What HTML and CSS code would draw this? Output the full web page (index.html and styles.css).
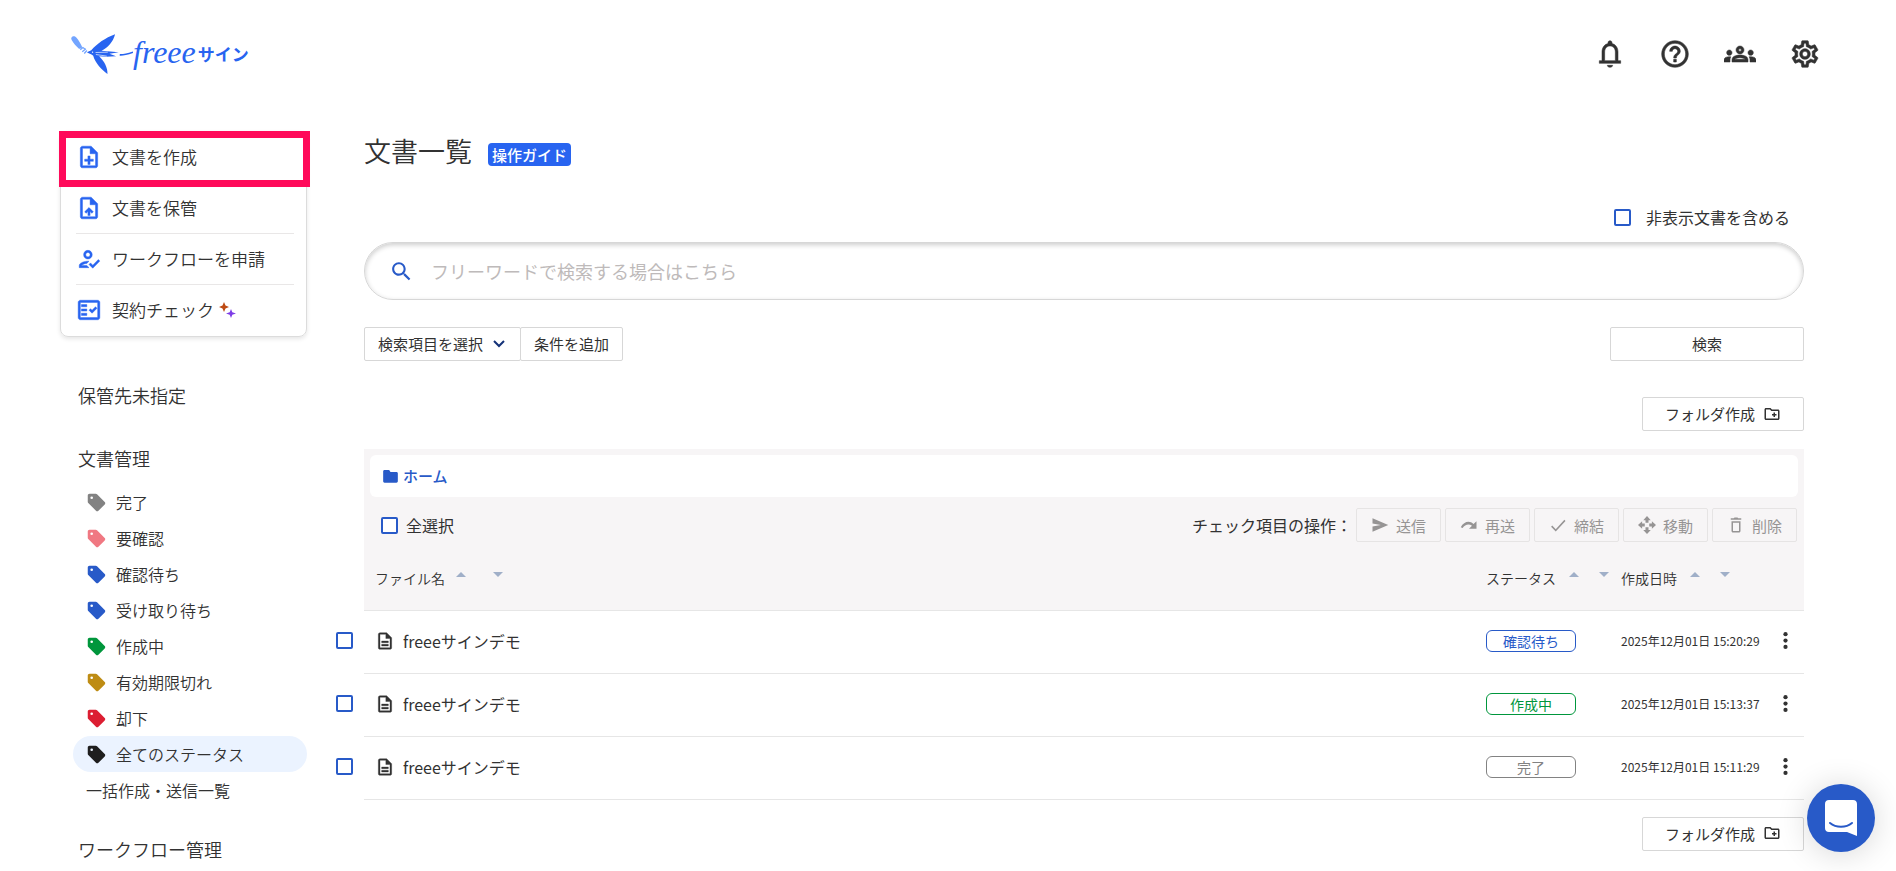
FILE: index.html
```
<!DOCTYPE html>
<html lang="ja">
<head>
    <meta charset="UTF-8">
    <meta name="viewport" content="width=device-width, initial-scale=1.0">
    <title>文書一覧 | freee サイン</title>
    <link rel="stylesheet" href="styles.css">
</head>
<body>
    <!-- shared icons -->
    <svg class="sprite" aria-hidden="true">
        <symbol id="tag" viewBox="0 0 24 24"><path d="M21.4 11.4l-8.8-8.8c-.4-.4-.9-.6-1.4-.6H4c-1.100 0-2 .9-2 2v7.200c0 .5.200 1 .6 1.400l8.800 8.800c.8.8 2.100.8 2.800 0l7.200-7.200c.8-.8.8-2 0-2.800zM6.500 8a1.500 1.500 0 1 1 0-3 1.500 1.500 0 0 1 0 3z"/></symbol>
        <symbol id="folder-add" viewBox="0 0 24 24"><path d="M20 6h-8l-2-2H4c-1.110 0-1.990.89-1.990 2L2 18c0 1.110.89 2 2 2h16c1.110 0 2-.89 2-2V8c0-1.110-.89-2-2-2zm0 12H4V6h5.170l2 2H20v10zm-8-4h2v2h2v-2h2v-2h-2v-2h-2v2h-2z"/></symbol>
        <symbol id="file" viewBox="0 0 24 24"><path d="M8 16h8v2H8zm0-4h8v2H8zm6-10H6c-1.100 0-2 .9-2 2v16c0 1.100.89 2 1.990 2H18c1.100 0 2-.9 2-2V8l-6-6zm4 18H6V4h7v5h5v11z"/></symbol>
        <symbol id="more" viewBox="0 0 24 24"><circle cx="12" cy="3" r="3"/><circle cx="12" cy="12" r="3"/><circle cx="12" cy="21" r="3"/></symbol>
        <symbol id="up" viewBox="0 0 10 5"><path d="M0 5l5-5 5 5z"/></symbol>
        <symbol id="down" viewBox="0 0 10 5"><path d="M0 0l5 5 5-5z"/></symbol>
    </svg>

    <header class="header">
        <a class="logo" href="#" aria-label="freee サイン">
            <svg class="logo-bird" viewBox="60 40 190 125">
                <path fill="#73a5ff" d="M64 54c2-6 10-7 15-1 7 8 13 18 18 29-3 4-6 5-10 5-8-8-17-17-21-25-1-3-3-5-2-8z"/>
                <path fill="none" stroke="#73a5ff" stroke-width="4" d="M91 90l8-7 7 5M97 96l11-9M103 101l8-9"/>
                <path d="M111 97l13-6c18-20 42-37 72-48-6 23-22 41-41 50l18 1 34 3-28 5 20 7-30 2-21-2c15 15 26 34 25 54-18-13-37-33-43-55-4-5-12-7-19-11z"/>
                <path fill="none" stroke="#fff" stroke-width="2" d="M137 98l37-1M138 104l33 5"/>
                <circle cx="128" cy="97" r="2" fill="#fff"/>
                <path fill="none" stroke="#2864f0" stroke-width="5" d="M210 105c12 1 22-2 40-8"/>
            </svg>
            <span class="logo-name">freee</span>
            <span class="logo-product">サイン</span>
        </a>
        <nav class="header-nav">
            <button type="button" aria-label="お知らせ"><svg viewBox="0 0 24 24"><path d="M12 22c1.100 0 2-.6 2-1.500h-4c0 .9.900 1.500 2 1.500zm6-5v-6.500c0-3.070-1.630-5.640-4.500-6.320V3.500C13.500 2.670 12.830 2 12 2s-1.500.67-1.500 1.500v.68C7.640 4.860 6 7.420 6 10.500V17H4v2h16v-2h-2zm-2 0H8v-6.500C8 8.020 9.510 6 12 6s4 2.020 4 4.500V17z"/></svg></button>
            <button type="button" aria-label="ヘルプ"><svg viewBox="0 0 24 24"><path d="M11 18h2v-2h-2v2zm1-16C6.480 2 2 6.480 2 12s4.480 10 10 10 10-4.480 10-10S17.520 2 12 2zm0 18c-4.410 0-8-3.590-8-8s3.590-8 8-8 8 3.590 8 8-3.590 8-8 8zm0-14c-2.210 0-4 1.790-4 4h2c0-1.100.9-2 2-2s2 .9 2 2c0 2-3 1.750-3 5h2c0-2.250 3-2.500 3-5 0-2.210-1.790-4-4-4z"/></svg></button>
            <button type="button" aria-label="グループ"><svg viewBox="0 0 24 24"><path d="M4 13c1.100 0 2-.9 2-2s-.9-2-2-2-2 .9-2 2 .9 2 2 2zm1.130 1.100C4.760 14.040 4.390 14 4 14c-.99 0-1.930.21-2.780.58C.48 14.900 0 15.620 0 16.430V18h4.500v-1.610c0-.83.23-1.610.63-2.290zM20 13c1.100 0 2-.9 2-2s-.9-2-2-2-2 .9-2 2 .9 2 2 2zm4 3.430c0-.81-.48-1.530-1.220-1.850C21.930 14.210 20.990 14 20 14c-.39 0-.76.04-1.130.1.400.68.630 1.460.630 2.290V18H24v-1.570zm-7.760-2.780c-1.170-.52-2.610-.9-4.240-.9s-3.070.39-4.240.9C6.680 14.130 6 15.210 6 16.390V18h12v-1.610c0-1.180-.68-2.260-1.760-2.740zM8.070 16c.09-.23.13-.39.91-.69.97-.38 1.990-.56 3.020-.56s2.050.18 3.020.56c.77.3.81.46.91.69H8.070zM12 8c.55 0 1 .45 1 1s-.45 1-1 1-1-.45-1-1 .45-1 1-1m0-2c-1.660 0-3 1.340-3 3s1.340 3 3 3 3-1.340 3-3-1.340-3-3-3z"/></svg></button>
            <button type="button" aria-label="設定"><svg viewBox="0 0 24 24"><path d="M19.430 12.980c.04-.32.070-.64.070-.98s-.03-.66-.07-.98l2.110-1.650c.19-.15.240-.42.120-.64l-2-3.460c-.09-.16-.26-.25-.44-.25-.06 0-.12.010-.17.030l-2.490 1c-.52-.4-1.080-.73-1.690-.98l-.38-2.650C14.460 2.180 14.250 2 14 2h-4c-.25 0-.46.180-.49.420l-.38 2.650c-.61.250-1.170.59-1.690.98l-2.490-1c-.06-.02-.12-.03-.18-.03-.17 0-.34.090-.43.250l-2 3.460c-.13.220-.07.490.12.640l2.110 1.650c-.04.320-.07.650-.07.980s.03.660.07.980l-2.110 1.650c-.19.150-.24.420-.12.640l2 3.460c.09.160.26.250.44.250.06 0 .12-.01.170-.03l2.490-1c.52.400 1.080.73 1.690.98l.38 2.650c.03.240.24.420.49.420h4c.25 0 .46-.18.490-.42l.38-2.650c.61-.25 1.170-.59 1.690-.98l2.490 1c.06.020.12.030.18.030.17 0 .34-.09.430-.25l2-3.460c.12-.22.070-.49-.12-.64l-2.110-1.650zm-1.980-1.710c.04.310.050.52.050.73s-.02.430-.05.730l-.14 1.130.89.7 1.080.84-.7 1.210-1.270-.51-1.040-.42-.9.68c-.43.320-.84.560-1.250.73l-1.060.43-.16 1.130-.2 1.350h-1.400l-.19-1.350-.16-1.130-1.060-.43c-.43-.18-.83-.41-1.230-.71l-.91-.7-1.060.43-1.270.51-.7-1.210 1.080-.84.89-.7-.14-1.130c-.03-.31-.05-.54-.05-.74s.02-.43.05-.73l.14-1.130-.89-.7-1.080-.84.7-1.210 1.270.51 1.040.42.9-.68c.43-.32.84-.56 1.250-.73l1.060-.43.16-1.130.2-1.350h1.390l.19 1.350.16 1.130 1.060.43c.43.180.83.410 1.230.71l.91.7 1.060-.43 1.270-.51.7 1.210-1.070.85-.89.7.14 1.130zM12 8c-2.210 0-4 1.790-4 4s1.790 4 4 4 4-1.790 4-4-1.790-4-4-4zm0 6c-1.100 0-2-.9-2-2s.9-2 2-2 2 .9 2 2-.9 2-2 2z"/></svg></button>
        </nav>
    </header>

    <div class="layout">
        <aside class="sidebar">
            <ul class="actions">
                <li class="marked"><a href="#"><svg viewBox="0 0 24 24"><path d="M13 11h-2v3H8v2h3v3h2v-3h3v-2h-3zm1-9H6c-1.100 0-2 .9-2 2v16c0 1.100.89 2 1.990 2H18c1.100 0 2-.9 2-2V8l-6-6zm4 18H6V4h7v5h5v11z"/></svg>文書を作成</a></li>
                <li><a href="#"><svg viewBox="0 0 24 24"><path d="M14 2H6c-1.100 0-2 .9-2 2v16c0 1.100.89 2 1.990 2H18c1.100 0 2-.9 2-2V8l-6-6zm4 18H6V4h7v5h5v11zM8 15.500l1.410 1.410L11 15.330V19h2v-3.670l1.590 1.590L16 15.500 12.010 11.500z"/></svg>文書を保管</a></li>
                <li><a href="#"><svg viewBox="0 0 24 24"><path d="M11 12c2.210 0 4-1.790 4-4s-1.790-4-4-4-4 1.790-4 4 1.790 4 4 4zm0-6c1.100 0 2 .9 2 2s-.9 2-2 2-2-.9-2-2 .9-2 2-2zM5 18c.2-.63 2.570-1.680 4.960-1.940l2.040-2c-.39-.04-.68-.06-1-.06-2.670 0-8 1.340-8 4v2h9l-2-2H5zm15.600-5.500l-5.130 5.170-2.070-2.080L12 17l3.470 3.500L22 13.910z"/></svg>ワークフローを申請</a></li>
                <li><a href="#"><svg viewBox="0 0 24 24"><path d="M20 3H4c-1.100 0-2 .9-2 2v14c0 1.100.9 2 2 2h16c1.100 0 2-.9 2-2V5c0-1.100-.9-2-2-2zm0 16H4V5h16v14zM19.410 10.420L17.990 9l-3.170 3.170-1.410-1.420L12 12.160 14.820 15zM5 7h5v2H5zm0 4h5v2H5zm0 4h5v2H5z"/></svg>契約チェック<svg class="sparkle" viewBox="0 0 18 18"><path fill="#be4b14" d="M6 1l1.500 3.500L11 6 7.500 7.500 6 11 4.500 7.500 1 6l3.500-1.500z"/><path fill="#7d3ce6" d="M13 8l1.300 3.200 3.700 1.300-3.700 1.300L13 17l-1.300-3.200L8 12.500l3.700-1.300z"/></svg></a></li>
            </ul>

            <nav class="menu">
                <a class="menu-title" href="#">保管先未指定</a>
                <a class="menu-title" href="#">文書管理</a>
                <ul class="statuses">
                    <li><a href="#"><svg class="gray"><use href="#tag"/></svg>完了</a></li>
                    <li><a href="#"><svg class="pink"><use href="#tag"/></svg>要確認</a></li>
                    <li><a href="#"><svg class="blue"><use href="#tag"/></svg>確認待ち</a></li>
                    <li><a href="#"><svg class="blue"><use href="#tag"/></svg>受け取り待ち</a></li>
                    <li><a href="#"><svg class="green"><use href="#tag"/></svg>作成中</a></li>
                    <li><a href="#"><svg class="yellow"><use href="#tag"/></svg>有効期限切れ</a></li>
                    <li><a href="#"><svg class="red"><use href="#tag"/></svg>却下</a></li>
                    <li><a class="current" href="#"><svg class="black"><use href="#tag"/></svg>全てのステータス</a></li>
                    <li><a href="#">一括作成・送信一覧</a></li>
                </ul>
                <a class="menu-title" href="#">ワークフロー管理</a>
            </nav>
        </aside>

        <main class="main">
            <div class="title-row">
                <h1>文書一覧</h1>
                <a class="guide" href="#">操作ガイド</a>
            </div>

            <label class="hidden-docs"><input type="checkbox">非表示文書を含める</label>

            <form class="search" action="#">
                <div class="search-box">
                    <svg viewBox="0 0 24 24"><path d="M15.500 14h-.79l-.28-.27C15.410 12.590 16 11.110 16 9.500 16 5.910 13.090 3 9.500 3S3 5.910 3 9.500 5.910 16 9.500 16c1.610 0 3.090-.59 4.230-1.570l.27.28v.79l5 4.990L20.490 19l-4.990-5zm-6 0C7.010 14 5 11.990 5 9.500S7.010 5 9.500 5 14 7.010 14 9.500 11.990 14 9.500 14z"/></svg>
                    <input type="text" aria-label="フリーワード" placeholder="フリーワードで検索する場合はこちら">
                </div>
                <div class="search-controls">
                    <select class="btn" aria-label="検索項目"><option>検索項目を選択</option></select>
                    <button class="btn add" type="button">条件を追加</button>
                    <button class="btn submit" type="submit">検索</button>
                </div>
            </form>

            <div class="folder-row">
                <button class="btn folder" type="button">フォルダ作成<svg><use href="#folder-add"/></svg></button>
            </div>

            <section class="panel">
                <div class="breadcrumb">
                    <a href="#"><svg viewBox="0 0 24 24"><path d="M10 3H3c-1.100 0-2 1-2 2v15c0 1 .9 2 2 2h18c1.100 0 2-1 2-2V8c0-1.100-.9-2-2-2h-9z"/></svg>ホーム</a>
                </div>
                <div class="bulk">
                    <label class="select-all"><input type="checkbox">全選択</label>
                    <span class="bulk-label">チェック項目の操作：</span>
                    <button class="btn" type="button" disabled><svg viewBox="0 0 24 24"><path d="M2 3l21 9-21 9v-7l11-2-11-2z"/></svg>送信</button>
                    <button class="btn" type="button" disabled><svg viewBox="0 0 24 24"><path d="M22 7v10H12l4-4c-4.500-3.500-9.500-1.500-12.500 3l-2.500-1c4-7.500 11.500-9.500 17-4.500z"/></svg>再送</button>
                    <button class="btn" type="button" disabled><svg viewBox="0 0 24 24"><path d="M9 17.500L4.300 12.800l-1.500 1.500L9 20.500 22 6.500l-1.500-1.500z"/></svg>締結</button>
                    <button class="btn" type="button" disabled><svg viewBox="0 0 24 24"><path d="M12 0l5 5.500h-3V9h-4V5.500H7zM12 24l-5-5.500h3V15h4v3.500h3zM0 12l5.500-5v3H9v4H5.500v3zM24 12l-5.500 5v-3H15v-4h3.500V7z"/></svg>移動</button>
                    <button class="btn" type="button" disabled><svg viewBox="0 0 24 24"><path d="M15 3l-1-1h-4L9 3H5v2h14V3zM6 7v13c0 1.100.9 2 2 2h8c1.100 0 2-.9 2-2V7zm10 13H8V9h8z"/></svg>削除</button>
                </div>
            </section>

            <table class="docs">
                <thead>
                    <tr>
                        <td class="col-check"></td>
                        <th class="col-name"><div class="sort wide">ファイル名<button type="button" aria-label="昇順"><svg><use href="#up"/></svg></button><button type="button" aria-label="降順"><svg><use href="#down"/></svg></button></div></th>
                        <th class="col-status"><div class="sort">ステータス<button type="button" aria-label="昇順"><svg><use href="#up"/></svg></button><button type="button" aria-label="降順"><svg><use href="#down"/></svg></button></div></th>
                        <th class="col-date"><div class="sort">作成日時<button type="button" aria-label="昇順"><svg><use href="#up"/></svg></button><button type="button" aria-label="降順"><svg><use href="#down"/></svg></button></div></th>
                        <td class="col-menu"></td>
                    </tr>
                </thead>
                <tbody>
                    <tr>
                        <td class="col-check"><input type="checkbox" aria-label="文書を選択"></td>
                        <td class="col-name"><a href="#"><svg><use href="#file"/></svg>freeeサインデモ</a></td>
                        <td><span class="status blue">確認待ち</span></td>
                        <td class="date">2025年12月01日 15:20:29</td>
                        <td><button type="button" class="more" aria-label="メニュー"><svg><use href="#more"/></svg></button></td>
                    </tr>
                    <tr>
                        <td class="col-check"><input type="checkbox" aria-label="文書を選択"></td>
                        <td class="col-name"><a href="#"><svg><use href="#file"/></svg>freeeサインデモ</a></td>
                        <td><span class="status green">作成中</span></td>
                        <td class="date">2025年12月01日 15:13:37</td>
                        <td><button type="button" class="more" aria-label="メニュー"><svg><use href="#more"/></svg></button></td>
                    </tr>
                    <tr>
                        <td class="col-check"><input type="checkbox" aria-label="文書を選択"></td>
                        <td class="col-name"><a href="#"><svg><use href="#file"/></svg>freeeサインデモ</a></td>
                        <td><span class="status gray">完了</span></td>
                        <td class="date">2025年12月01日 15:11:29</td>
                        <td><button type="button" class="more" aria-label="メニュー"><svg><use href="#more"/></svg></button></td>
                    </tr>
                </tbody>
            </table>

            <div class="folder-row bottom">
                <button class="btn folder" type="button">フォルダ作成<svg><use href="#folder-add"/></svg></button>
            </div>
        </main>
    </div>

    <button class="chat" type="button" aria-label="チャットを開く">
        <svg viewBox="0 0 32 36"><path fill="#fff" d="M4 0h24c2.500 0 4 1.500 4 4v32l-10-4H4c-2.500 0-4-1.500-4-4V4c0-2.500 1.500-4 4-4z"/><path fill="none" stroke="#285ac8" stroke-width="2" stroke-linecap="round" d="M5 23c6 5 16 5 22 0"/></svg>
    </button>
</body>
</html>
```
FILE: styles.css
```
*,
*::after {
    box-sizing: border-box;
}

body {
    margin: 0;
    color: #323232;
    background: #fff;
    font-family: "Noto Sans CJK JP", sans-serif;
    font-size: 16px;
    line-height: 24px;
}

a {
    color: inherit;
    text-decoration: none;
}

ul {
    list-style: none;
    margin: 0;
    padding: 0;
}

button,
input,
select {
    font-family: inherit;
    color: inherit;
}

button {
    cursor: pointer;
}

svg {
    flex: none;
    fill: currentColor;
}

.sprite {
    display: none;
}

input[type="checkbox"] {
    appearance: none;
    flex: none;
    display: block;
    width: 17px;
    height: 17px;
    margin: 0;
    border: 2px solid #285ac8;
    border-radius: 2px;
    background: #fff;
}

.gray { color: #828282; }
.pink { color: #f07882; }
.blue { color: #285ac8; }
.green { color: #00963c; }
.yellow { color: #be8c14; }
.red { color: #dc1e32; }
.black { color: #1e1e1e; }

/* header */
.header {
    display: flex;
    justify-content: space-between;
    align-items: center;
    height: 108px;
    padding: 0 75px 0 70px;
}

.logo {
    display: flex;
    align-items: center;
    color: #2864f0;
}

.logo-bird {
    width: 63px;
    height: 42px;
}

.logo-name {
    padding-bottom: 4px;
    font-family: "Liberation Serif", serif;
    font-size: 32px;
    font-style: italic;
}

.logo-product {
    margin-left: 2px;
    font-size: 17px;
    font-weight: bold;
}

.header-nav {
    display: flex;
    gap: 33px;
}

.header-nav button {
    display: flex;
    padding: 0;
    border: 0;
    background: none;
}

.header-nav svg {
    width: 32px;
    height: 32px;
    stroke: currentColor;
    stroke-width: 0.4;
}

.layout {
    display: flex;
    align-items: flex-start;
    gap: 57px;
    padding: 23px 92px 0 60px;
}

/* sidebar */
.sidebar {
    flex: none;
    width: 247px;
    font-weight: 350;
}

.actions {
    padding: 0 12px 1px 15px;
    border: 1px solid #dcdcdc;
    border-radius: 8px;
    box-shadow: 0 2px 4px rgba(0, 0, 0, 0.1);
}

.actions li + li {
    border-top: 1px solid #e9e7e7;
}

.actions a {
    display: flex;
    align-items: center;
    gap: 10px;
    height: 50px;
    font-size: 17px;
}

.actions svg {
    width: 26px;
    height: 26px;
    color: #2864f0;
    stroke: currentColor;
    stroke-width: 0.4;
}

.actions .sparkle {
    width: 18px;
    height: 18px;
    margin-left: -6px;
    stroke: none;
}

.marked {
    position: relative;
}

.marked::after {
    content: "";
    position: absolute;
    top: -1px;
    left: -17px;
    right: -16px;
    height: 56px;
    border: 7px solid #ff0a5a;
    pointer-events: none;
}

.menu {
    padding-top: 46px;
}

.menu-title {
    display: block;
    margin-bottom: 39px;
    padding-left: 18px;
    font-size: 18px;
}

.statuses {
    margin: -25px 0 29px 13px;
}

.statuses a {
    display: flex;
    align-items: center;
    gap: 9px;
    height: 36px;
    padding-left: 13px;
    border-radius: 18px;
}

.statuses svg {
    width: 21px;
    height: 21px;
}

.statuses .current {
    background: #ebf3ff;
}

/* main */
.main {
    flex: 1;
    min-width: 0;
}

.title-row {
    display: flex;
    align-items: center;
    gap: 16px;
    height: 40px;
}

h1 {
    margin: 0;
    font-size: 27px;
    font-weight: 350;
}

.guide {
    margin-top: 6px;
    padding: 0 4px;
    border-radius: 4px;
    background: #2864f0;
    color: #fff;
    font-size: 15px;
    font-weight: 500;
    line-height: 23px;
}

.hidden-docs {
    display: flex;
    align-items: center;
    justify-content: flex-end;
    gap: 15px;
    margin-top: 34px;
    padding-right: 14px;
}

.search-box {
    display: flex;
    align-items: center;
    gap: 17px;
    height: 58px;
    margin-top: 13px;
    padding: 0 24px;
    border: 1px solid #d7d7d7;
    border-radius: 29px;
    box-shadow: inset 0 2px 5px rgba(0, 0, 0, 0.2);
}

.search-box svg {
    width: 25px;
    height: 25px;
    color: #285ac8;
}

.search-box input {
    flex: 1;
    min-width: 0;
    padding: 0;
    border: 0;
    outline: 0;
    background: none;
    font-size: 18px;
}

.search-box input::placeholder {
    color: #bebaba;
}

.btn {
    display: flex;
    align-items: center;
    justify-content: center;
    height: 34px;
    padding: 0 13px 1px;
    border: 1px solid #d7d7d7;
    border-radius: 2px;
    background: #fff;
    font-size: 15px;
}

.search-controls {
    display: flex;
    margin-top: 27px;
}

select.btn {
    appearance: none;
    padding-right: 36px;
    background: #fff url("data:image/svg+xml,%3Csvg xmlns='http://www.w3.org/2000/svg' width='12' height='8' fill='none' stroke='%23143278' stroke-width='2'%3E%3Cpath d='M1 1l5 5 5-5'/%3E%3C/svg%3E") no-repeat right 15px center;
}

.btn.add {
    margin-left: -1px;
}

.btn.submit {
    width: 194px;
    margin-left: auto;
}

.folder-row {
    display: flex;
    justify-content: flex-end;
    margin: 36px 0 18px;
}

.folder-row.bottom {
    margin: 17px 0 0;
}

.btn.folder {
    gap: 8px;
    padding: 0 22px 1px;
}

.folder svg {
    width: 18px;
    height: 18px;
}

.panel {
    padding: 6px 6px 0;
    background: #f7f5f6;
}

.breadcrumb {
    display: flex;
    align-items: center;
    height: 42px;
    padding-left: 12px;
    border-radius: 6px;
    background: #fff;
}

.breadcrumb a {
    display: flex;
    align-items: center;
    gap: 4px;
    color: #285ac8;
    font-size: 15px;
    font-weight: 500;
}

.breadcrumb svg {
    width: 17px;
    height: 16px;
}

.bulk {
    display: flex;
    align-items: center;
    gap: 4px;
    padding: 11px 1px 0 0;
}

.select-all {
    display: flex;
    align-items: center;
    gap: 8px;
    margin-right: auto;
    padding-left: 11px;
}

.bulk .btn {
    gap: 7px;
    width: 85px;
    padding: 0;
    border-color: #e6e4e4;
    background: none;
    color: #969494;
    cursor: default;
}

.bulk svg {
    width: 18px;
    height: 18px;
}

/* row checkboxes hang in the gutter left of the panel */
.docs {
    width: calc(100% + 28px);
    margin-left: -28px;
    border-collapse: collapse;
    table-layout: fixed;
}

.docs td,
.docs th {
    height: 63px;
    padding: 0 0 2px;
    border-bottom: 1px solid #e6e6e6;
    text-align: left;
    font-weight: normal;
}

.docs thead td,
.docs thead th {
    height: 68px;
    padding-top: 4px;
    padding-bottom: 0;
    background: #f7f5f6;
    font-weight: 350;
}

.docs .col-check {
    width: 28px;
    border: 0;
    background: none;
}

.docs .col-name {
    padding-left: 11px;
}

.docs .col-status {
    width: 135px;
}

.docs .col-date {
    width: 152px;
}

.docs .col-menu {
    width: 31px;
}

.docs td a {
    display: flex;
    align-items: center;
    gap: 8px;
}

.docs td a svg {
    width: 20px;
    height: 20px;
    stroke: currentColor;
    stroke-width: 0.4;
}

.sort {
    display: flex;
    align-items: center;
    gap: 20px;
    font-size: 14px;
}

.sort.wide {
    gap: 27px;
}

.sort button {
    display: flex;
    padding: 0 0 6px;
    border: 0;
    background: none;
    color: #a0afc8;
}

.sort button:first-of-type {
    margin-left: -7px;
}

.sort.wide button:first-of-type {
    margin-left: -16px;
}

.sort svg {
    width: 10px;
    height: 5px;
}

.status {
    display: block;
    width: 90px;
    border: 1px solid currentColor;
    border-radius: 6px;
    text-align: center;
    font-size: 14px;
    line-height: 20px;
}

.docs .date {
    font-size: 12px;
    white-space: nowrap;
}

.more {
    display: flex;
    justify-content: center;
    width: 24px;
    padding: 0;
    border: 0;
    background: none;
}

.more svg {
    width: 17px;
    height: 17px;
}

/* chat launcher floats over the page */
.chat {
    position: fixed;
    right: 21px;
    bottom: 19px;
    display: flex;
    align-items: center;
    justify-content: center;
    width: 68px;
    height: 68px;
    padding: 0;
    border: 0;
    border-radius: 50%;
    background: #285ac8;
    box-shadow: 0 2px 32px rgba(0, 0, 0, 0.16);
}

.chat svg {
    width: 32px;
    height: 36px;
}
```
